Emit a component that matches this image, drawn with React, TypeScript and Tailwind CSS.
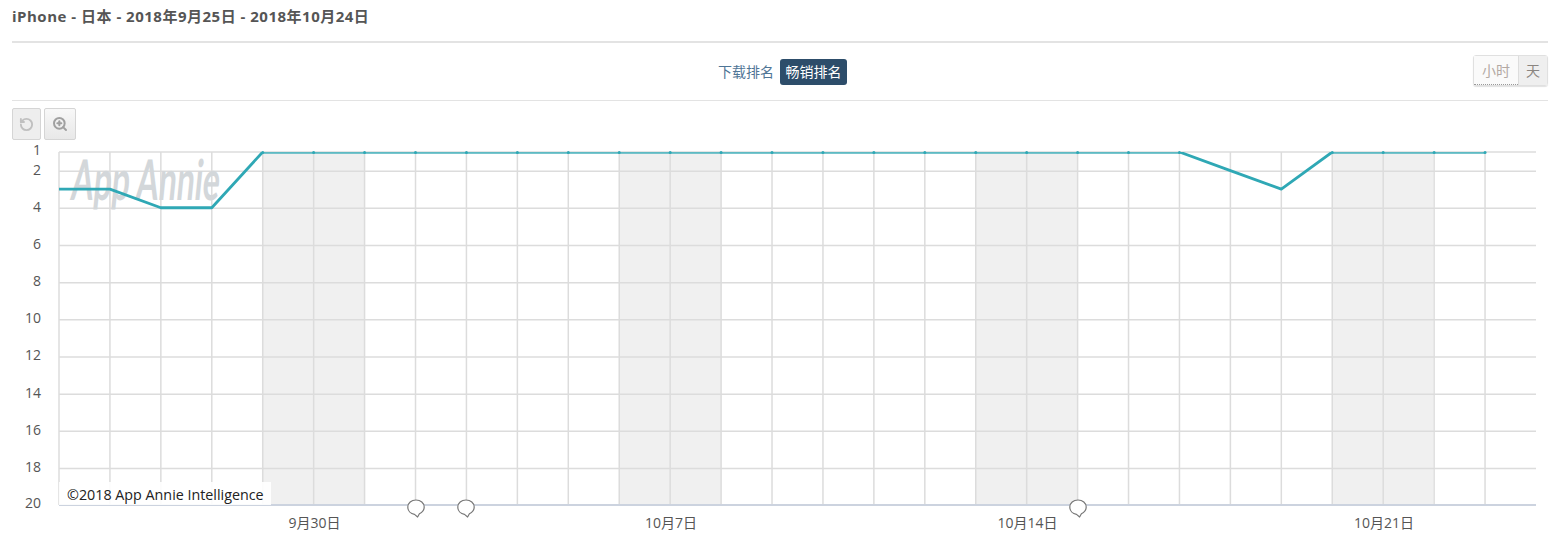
import React from "react";
import { RotateCcw, ZoomIn } from "lucide-react";

const FONT = "font-['Open_Sans','Noto_Sans_CJK_SC',sans-serif]";
const SVG_FONT = "'Open Sans','Noto Sans CJK SC',sans-serif";

const xAt = (i: number) => 59 + i * 50.93;
const yAt = (rank: number) => 152 + (rank - 1) * 18.58;
// grid lines sit a hair lower than the data points
const gridY = (t: number) => (t === 1 ? 152 : t === 20 ? 505 : yAt(t) + 0.6);

const ranks = [
  3, 3, 4, 4, 1, 1, 1, 1, 1, 1, 1, 1, 1, 1, 1, 1, 1, 1, 1, 1, 1, 1, 1, 2, 3, 1, 1, 1, 1,
];
const yTicks = [1, 2, 4, 6, 8, 10, 12, 14, 16, 18, 20];
const weekends = [
  [263, 365],
  [619, 721],
  [975, 1077],
  [1332, 1433],
];
const dateLabels = [
  { x: 314.5, text: "9月30日" },
  { x: 671, text: "10月7日" },
  { x: 1027.5, text: "10月14日" },
  { x: 1384, text: "10月21日" },
];
const notes = [416, 466, 1078];

const RankChart = () => {
  const points = ranks.map((r, i) => `${xAt(i)},${yAt(r)}`).join(" ");

  return (
    <svg width={1557} height={397} viewBox="0 140 1557 397" className="block">
      <defs>
        <clipPath id="plot">
          <rect x={50} y={152} width={1500} height={360} />
        </clipPath>
      </defs>

      {weekends.map(([a, b]) => (
        <rect key={a} x={a} y={152} width={b - a} height={353} fill="#f0f0f0" />
      ))}

      {yTicks.map((t) => (
        <line key={t} x1={59} x2={1536} y1={gridY(t)} y2={gridY(t)} stroke="#dcdcdc" strokeWidth={1.5} />
      ))}
      {ranks.map((_, i) => (
        <line key={i} x1={xAt(i)} x2={xAt(i)} y1={152} y2={505} stroke="#dcdcdc" strokeWidth={1.5} />
      ))}
      <line x1={59} x2={1536} y1={505} y2={505} stroke="#ccd3df" strokeWidth={2} />

      <text
        transform="translate(70 200) scale(0.57 1) skewX(-10)"
        fontFamily="'Lato',sans-serif"
        fontSize={56}
        fontWeight={700}
        fill="#d3d7da"
      >
        App Annie
      </text>

      <g clipPath="url(#plot)">
        <polyline points={points} fill="none" stroke="#2fa8b5" strokeWidth={2.8} strokeLinejoin="round" />
        <line x1={263} x2={1180} y1={153} y2={153} stroke="#6fc0c9" strokeWidth={1.6} />
        <line x1={1332} x2={1485} y1={153} y2={153} stroke="#6fc0c9" strokeWidth={1.6} />
      </g>
      {ranks.map((r, i) =>
        r === 1 ? <circle key={i} cx={xAt(i)} cy={152.6} r={1.5} fill="#2fa8b5" /> : null,
      )}

      {yTicks.map((t) => (
        <text
          key={t}
          x={41}
          y={t === 20 ? 508 : t === 1 ? 155 : yAt(t) + 4}
          textAnchor="end"
          fontFamily={SVG_FONT}
          fontSize={14}
          fill="#555555"
        >
          {t}
        </text>
      ))}

      {dateLabels.map((d) => (
        <text key={d.x} x={d.x} y={528} textAnchor="middle" fontFamily={SVG_FONT} fontSize={14} fill="#555555">
          {d.text}
        </text>
      ))}

      {notes.map((x) => (
        <path
          key={x}
          transform={`translate(${x} 507)`}
          d="M-1.5 7.4 C-5.4 6.8 -8.2 3.8 -8.2 0 C-8.2 -4.2 -4.6 -7 0 -7 C4.6 -7 8.2 -4.2 8.2 0 C8.2 3 6.2 5.4 3.4 6.8 L1.6 10 Z"
          fill="#ffffff"
          stroke="#777777"
          strokeWidth={1.2}
          strokeLinejoin="round"
        />
      ))}
    </svg>
  );
};

export default function App() {
  return (
    <div className={`relative w-[1557px] h-[537px] overflow-hidden bg-white ${FONT}`}>
      <div className="pl-3 pr-[9px]">
        <h3 className="h-[41px] pt-[6px] text-[15px] leading-[20px] font-bold tracking-[0.5px] text-[#555555]">
          iPhone - 日本 - 2018年9月25日 - 2018年10月24日
        </h3>
        <div className="h-[60px] border-y-2 border-y-[#e3e3e3] border-b-[1.5px] relative flex items-center justify-center pl-[5px]">
          <span className="mr-[6px] text-[14px] text-[#4f7596]">下载排名</span>
          <span className="h-[26px] w-[67px] rounded-[3px] bg-[#2d4d6a] text-center text-[14px] leading-[26px] text-white">
            畅销排名
          </span>
          <div className="absolute right-0 top-[12px] flex h-[31px] w-[75px] rounded-[3px] border border-[#e0e0e0] text-[14px] shadow-[0_1px_1px_rgba(0,0,0,0.12)]">
            <span className="w-[44px] border-b border-dotted border-b-[#999999] bg-[#fafafa] text-center leading-[29px] text-[#b3a9a3]">
              小时
            </span>
            <span className="flex-1 border-l border-[#dddddd] bg-[#efefef] text-center leading-[29px] text-[#8a8580]">
              天
            </span>
          </div>
        </div>
        <div className="flex h-[39px] gap-[3px] pt-[7px]">
          <button className="flex h-[32px] w-[29px] items-center justify-center rounded-[2px] border border-[#d5d5d5] bg-[#eeeeee]">
            <RotateCcw size={15} strokeWidth={3} color="#c0c0c0" />
          </button>
          <button className="flex h-[32px] w-[32px] items-center justify-center rounded-[2px] border border-[#d5d5d5] bg-gradient-to-b from-[#f8f8f8] to-[#e8e8e8]">
            <ZoomIn size={16} strokeWidth={3} color="#a0a0a0" />
          </button>
        </div>
      </div>

      <RankChart />

      <div className="absolute left-[59px] top-[482px] h-[23px] w-[212px] bg-white/90 pl-[8px] text-[14.3px] leading-[25px] text-[#222222]">
        ©2018 App Annie Intelligence
      </div>
    </div>
  );
}
